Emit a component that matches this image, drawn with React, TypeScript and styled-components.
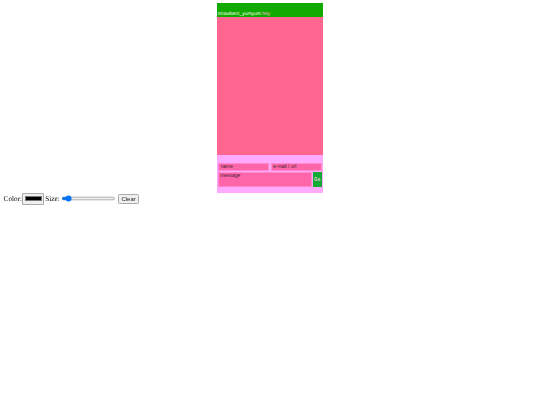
import React from "react";
import styled, { createGlobalStyle } from "styled-components";

const GlobalStyle = createGlobalStyle`
  html, body {
    margin: 0;
    padding: 0;
    background: #fff;
  }
`;

const App = () => {
  return (
    <Page>
      <GlobalStyle />
      <Chatbox>
        <Header>
          <Nick>strawberri_yumyum</Nick>
          <Said>hey</Said>
        </Header>
        <Messages />
        <Band />
        <Form>
          <FieldRow>
            <Field placeholder="name" />
            <Field placeholder="e-mail / url" />
          </FieldRow>
          <MessageRow>
            <MessageField placeholder="message" />
            <GoButton>Go</GoButton>
          </MessageRow>
        </Form>
        <Footer />
      </Chatbox>
      <Controls>
        <label>Color:</label>
        <ColorInput type="color" defaultValue="#000000" />
        <SizeLabel>Size:</SizeLabel>
        <SizeInput type="range" min={1} max={50} defaultValue={5} />
        <ClearButton>Clear</ClearButton>
      </Controls>
    </Page>
  );
};

const Page = styled.div`
  zoom: 0.45;
  width: 1200px;
  padding-top: 7px;
  font-family: "Liberation Serif", serif;
  font-size: 16px;
  text-rendering: geometricPrecision;
  filter: blur(1px);
`;

const Chatbox = styled.div`
  width: 236px;
  margin: 0 auto;
  background: #ffaaff;
  font-family: "Liberation Sans", sans-serif;
  font-size: 11px;
`;

const Header = styled.div`
  height: 31px;
  box-sizing: border-box;
  padding: 19px 2px 0;
  background: #11aa00;
  display: flex;
  gap: 3px;
  line-height: 12px;
`;

const Nick = styled.span`
  color: #fff;
`;

const Said = styled.span`
  color: #ffb3d9;
`;

const Messages = styled.div`
  height: 306px;
  background: #ff6690;
`;

const Band = styled.div`
  height: 18px;
`;

const Form = styled.div`
  display: flex;
  flex-direction: column;
  gap: 3px;
  padding: 0 3px;
`;

const FieldRow = styled.div`
  display: flex;
  justify-content: space-between;
`;

const Field = styled.input`
  width: 113px;
  height: 17px;
  box-sizing: border-box;
  padding: 0 3px;
  border: 1px solid #ff88cc;
  outline: none;
  background: #ff66aa;
  font: inherit;
  &::placeholder {
    color: #442233;
    opacity: 1;
  }
`;

const MessageRow = styled.div`
  display: flex;
  justify-content: space-between;
`;

const MessageField = styled.textarea`
  width: 208px;
  height: 33px;
  box-sizing: border-box;
  padding: 1px 2px;
  border: 1px solid #ff88cc;
  outline: none;
  resize: none;
  background: #ff66aa;
  font: inherit;
  &::placeholder {
    color: #442233;
    opacity: 1;
  }
`;

const GoButton = styled.button`
  width: 19px;
  height: 33px;
  padding: 0;
  border: none;
  background: #11aa33;
  color: #ffccdd;
  font: inherit;
  font-size: 10px;
  font-weight: bold;
`;

const Footer = styled.div`
  height: 13px;
`;

const Controls = styled.div`
  display: flex;
  align-items: center;
  padding-left: 8px;
`;

const ColorInput = styled.input`
  border: 1px solid #aaa;
  border-radius: 2px;
  padding: 2px;
  background: #efefef;
`;

const SizeLabel = styled.label`
  margin-left: 2px;
`;

const SizeInput = styled.input`
  width: 122px;
`;

const ClearButton = styled.button`
  margin: 3px 0 0 3px;
  padding: 2px 6px;
  border: 1px solid #aaa;
  border-radius: 3px;
  background: #efefef;
  color: #222;
  font-family: "Liberation Sans", sans-serif;
  font-size: 13.33px;
`;

export default App;
